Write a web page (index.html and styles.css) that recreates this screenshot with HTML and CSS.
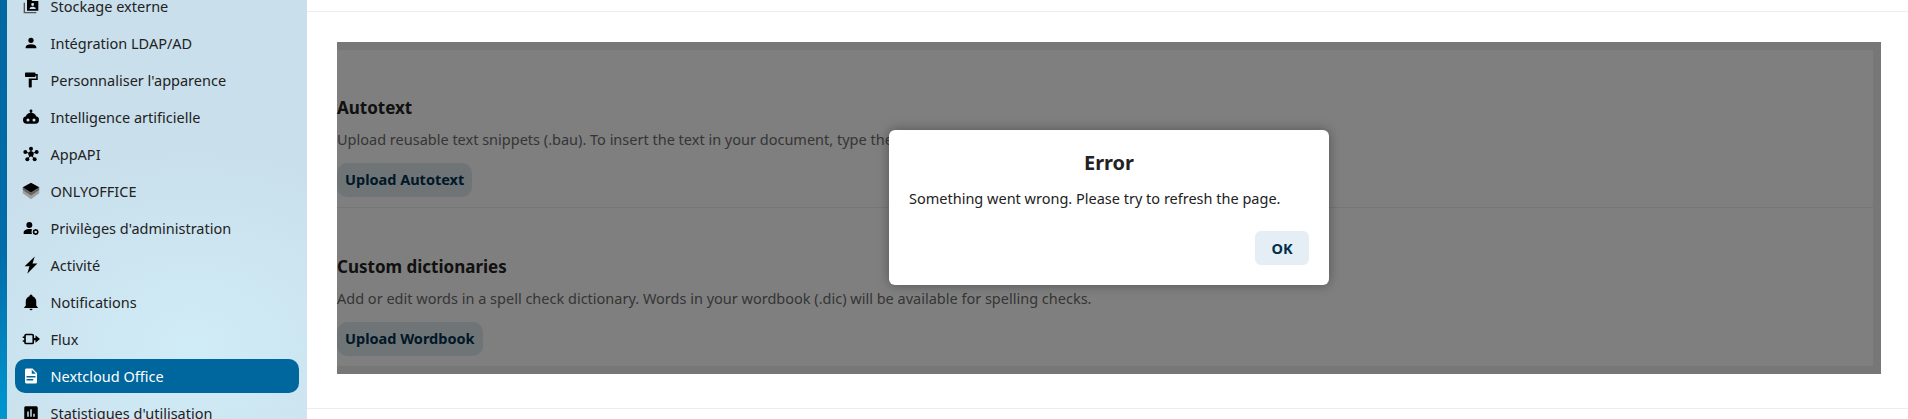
FILE: index.html
```html
<!DOCTYPE html>
<html lang="fr">
<head>
    <meta charset="UTF-8">
    <title>Nextcloud Office</title>
    <link rel="stylesheet" href="styles.css">
</head>
<body>
    <div class="strip"></div>

    <nav class="sidebar">
        <a class="nav-item">
            <svg class="icon" viewBox="0 0 24 24"><path d="M1 7v16h19v-2H3V7z" fill="#555"/><path d="M6 2h6l2 2.500h9V19H6zM14.500 7.500a2.200 2.200 0 1 0 0 4.400 2.200 2.200 0 0 0 0-4.400zM10 16.500h9v-1c0-1.500-3-2.300-4.500-2.300s-4.500.8-4.500 2.300z" fill-rule="evenodd"/></svg>
            <span>Stockage externe</span>
        </a>
        <a class="nav-item">
            <svg class="icon" viewBox="0 0 24 24"><path d="M12,4A4,4 0 0,1 16,8A4,4 0 0,1 12,12A4,4 0 0,1 8,8A4,4 0 0,1 12,4M12,14C16.420,14 20,15.790 20,18V20H4V18C4,15.790 7.580,14 12,14Z"/></svg>
            <span>Intégration LDAP/AD</span>
        </a>
        <a class="nav-item">
            <svg class="icon icon-lg" viewBox="0 0 24 24"><path d="M18,4V3A1,1 0 0,0 17,2H5A1,1 0 0,0 4,3V7A1,1 0 0,0 5,8H17A1,1 0 0,0 18,7V6H19V10H9V21A1,1 0 0,0 10,22H12A1,1 0 0,0 13,21V12H21V4H18Z"/></svg>
            <span>Personnaliser l'apparence</span>
        </a>
        <a class="nav-item">
            <svg class="icon" viewBox="0 0 24 24"><circle cx="12" cy="3" r="2.200"/><path d="M11 4h2v4h-2z"/><path d="M4 13a8 7.500 0 0 1 16 0z"/><path fill-rule="evenodd" d="M5.500 11h13a5.500 5.500 0 0 1 0 11h-13a5.500 5.500 0 0 1 0-11zM7.500 14.200a2.300 2.300 0 1 0 0 4.600 2.300 2.300 0 0 0 0-4.600zM16.500 14.200a2.300 2.300 0 1 0 0 4.600 2.300 2.300 0 0 0 0-4.600z"/></svg>
            <span>Intelligence artificielle</span>
        </a>
        <a class="nav-item">
            <svg class="icon" viewBox="0 0 24 24"><circle cx="12" cy="12" r="4"/><circle cx="12" cy="4" r="3"/><circle cx="3.500" cy="9" r="3"/><circle cx="20.500" cy="9" r="3"/><circle cx="6.500" cy="20" r="3"/><circle cx="17.500" cy="20" r="3"/><path d="M12 12V4M12 12L4 9M12 12l8-3M12 12l-5 8M12 12l5 8" stroke="#000" stroke-width="1.500"/></svg>
            <span>AppAPI</span>
        </a>
        <a class="nav-item">
            <svg class="icon icon-lg" viewBox="0 0 24 24"><path d="M12 15L1 11.500v3.500L12 23l11-8v-3.500z" fill="#a0a0a0"/><path d="M12 10.500L1 7v4l11 7 11-7V7z" fill="#666"/><path d="M12 1L1 7l11 6.500L23 7z"/></svg>
            <span>ONLYOFFICE</span>
        </a>
        <a class="nav-item">
            <svg class="icon" viewBox="0 0 24 24"><path d="M9.500 3a4.500 4.500 0 1 1 0 9 4.500 4.500 0 0 1 0-9zM9.500 13.500c1.500 0 3 .2 4.300.6-1.200 1.500-1.300 4.400-.3 6.900H1v-2.500c0-3 4-5 8.500-5z"/><circle cx="19" cy="18" r="3" fill="none" stroke="#000" stroke-width="2"/><path d="M19 13.500v2M19 20.500v2M14.500 18h2M21.500 18h2M15.800 14.800l1.400 1.400M20.800 19.800l1.400 1.400M15.800 21.200l1.400-1.400M20.800 16.200l1.400-1.400" stroke="#000" stroke-width="1.800"/></svg>
            <span>Privilèges d'administration</span>
        </a>
        <a class="nav-item">
            <svg class="icon icon-lg" viewBox="0 0 24 24"><path d="M17 0.500L3.500 13.500H10L7 23.500 20.500 10H14z"/></svg>
            <span>Activité</span>
        </a>
        <a class="nav-item">
            <svg class="icon icon-lg" viewBox="0 0 24 24"><path d="M21,19V20H3V19L5,17V11C5,7.900 7.030,5.170 10,4.290C10,4.190 10,4.100 10,4A2,2 0 0,1 12,2A2,2 0 0,1 14,4C14,4.100 14,4.190 14,4.290C16.970,5.170 19,7.900 19,11V17L21,19M14,21A2,2 0 0,1 12,23A2,2 0 0,1 10,21"/></svg>
            <span>Notifications</span>
        </a>
        <a class="nav-item">
            <svg class="icon icon-lg" viewBox="0 0 24 24"><rect x="4" y="6" width="11" height="12" rx="1.500" fill="none" stroke="#000" stroke-width="2.200"/><path d="M1 9.500h3M1 14.500h3" stroke="#000" stroke-width="2"/><path d="M15 10.500h3V7l6 5-6 5v-3.500h-3z"/></svg>
            <span>Flux</span>
        </a>
        <a class="nav-item active">
            <svg class="icon icon-lg" viewBox="0 0 24 24"><path d="M13,9H18.500L13,3.500V9M6,2H14L20,8V20A2,2 0 0,1 18,22H6C4.890,22 4,21.100 4,20V4C4,2.890 4.890,2 6,2M15,18V16H6V18H15M18,14V12H6V14H18Z"/></svg>
            <span>Nextcloud Office</span>
        </a>
        <a class="nav-item">
            <svg class="icon icon-lg" viewBox="0 0 24 24"><path d="M19 3H5C3.900 3 3 3.900 3 5V19C3 20.100 3.900 21 5 21H19C20.100 21 21 20.100 21 19V5C21 3.900 20.100 3 19 3M9 17H7V10H9V17M13 17H11V7H13V17M17 17H15V13H17V17Z"/></svg>
            <span>Statistiques d'utilisation</span>
        </a>
    </nav>

    <main class="content">
        <div class="top-rule"></div>

        <div class="settings-wrap">
            <section class="settings">
                <div class="group">
                    <h2>Autotext</h2>
                    <p>Upload reusable text snippets (.bau). To insert the text in your document, type the shortcut and press F3.</p>
                    <button type="button">Upload Autotext</button>
                </div>
                <div class="group">
                    <h2>Custom dictionaries</h2>
                    <p>Add or edit words in a spell check dictionary. Words in your wordbook (.dic) will be available for spelling checks.</p>
                    <button type="button">Upload Wordbook</button>
                </div>
            </section>

            <div class="overlay">
                <div class="dialog">
                    <h3>Error</h3>
                    <p>Something went wrong. Please try to refresh the page.</p>
                    <div class="dialog-actions">
                        <button type="button">OK</button>
                    </div>
                </div>
            </div>
        </div>

        <div class="bottom-rule"></div>
    </main>
</body>
</html>
```

FILE: styles.css
```css
/* General Styling */
html, body {
    height: 419px;
    overflow: hidden;
}

body {
    display: flex;
    margin: 0;
    background: #fff;
    color: #222;
    font-family: 'Noto Sans', sans-serif;
    font-size: 14.500px;
}

.strip {
    flex: 0 0 7px;
    background: linear-gradient(180deg, #0068a1 0%, #006ca8 60%, #0096d0 100%);
}

/* Sidebar */
.sidebar {
    flex: 0 0 300px;
    box-sizing: border-box;
    height: 460px;
    margin-top: -11px;
    padding: 0 8px;
    background: radial-gradient(ellipse 260px 200px at 62% 78%, #d0ecf7 0%, #cbe3ef 70%, #c9dfec 100%);
}

.nav-item {
    display: flex;
    align-items: center;
    height: 34px;
    margin-bottom: 3px;
    padding-left: 8px;
    border-radius: 10px;
    white-space: nowrap;
}

.nav-item.active {
    background: #00669e;
    color: #fff;
}

.icon {
    flex: 0 0 16px;
    width: 16px;
    height: 16px;
    margin-right: 11.500px;
}

.icon-lg {
    flex-basis: 18px;
    width: 18px;
    height: 18px;
    margin-left: -1px;
    margin-right: 10.500px;
}

.active .icon {
    fill: #fff;
}

/* Main column */
.content {
    flex: 1;
    min-width: 0;
}

.top-rule {
    height: 11px;
    border-bottom: 1px solid #ededed;
}

.settings-wrap {
    position: relative;
    margin: 30px 27px 0 30px;
    padding: 8px 8px 8px 0;
    background: #efefef;
}

.settings {
    height: 316px;
    background: #fff;
}

.group {
    box-sizing: border-box;
    height: 157px;
    padding-top: 45px;
}

.group + .group {
    height: 159px;
    border-top: 1px solid #ededed;
    padding-top: 46px;
}

h2 {
    margin: 0;
    font-size: 17px;
    line-height: 26px;
    font-weight: 700;
    color: #222;
}

.group p {
    margin: 6px 0 12px;
    line-height: 24px;
    color: #6b6b6b;
}

button {
    height: 34px;
    padding: 0 8px;
    border: none;
    border-radius: 10px;
    background: #dfe8ee;
    color: #00304f;
    font-family: inherit;
    font-size: 14.500px;
    font-weight: 700;
}

.group button {
    padding-bottom: 2px;
}

.bottom-rule {
    margin-top: 34px;
    border-top: 1px solid #ededed;
}

/* Error dialog */
.overlay {
    position: absolute;
    inset: 0;
    display: flex;
    align-items: center;
    justify-content: center;
    background: rgba(0, 0, 0, 0.5);
}

.dialog {
    box-sizing: border-box;
    width: 440px;
    height: 155px;
    margin-bottom: 1px;
    padding: 20px;
    border-radius: 6px;
    background: #fff;
    box-shadow: 0 0 12px rgba(0, 0, 0, 0.35);
}

.dialog h3 {
    margin: 0 0 10px;
    text-align: center;
    font-size: 20px;
    line-height: 26px;
    font-weight: 700;
}

.dialog p {
    margin: 0;
    line-height: 24px;
}

.dialog-actions {
    display: flex;
    justify-content: flex-end;
    margin-top: 21px;
}

.dialog-actions button {
    width: 54px;
    border-radius: 6px;
    background: #e6eef5;
}
```
